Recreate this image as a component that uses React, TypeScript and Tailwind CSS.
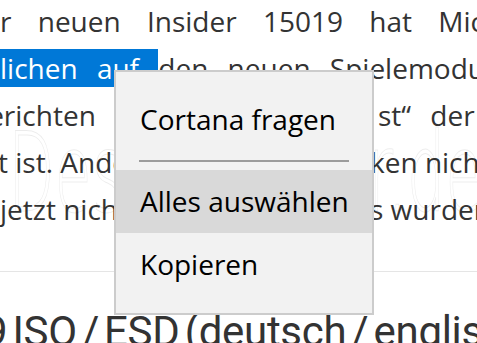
const body = "font-['Open_Sans',sans-serif] text-[28px] leading-[47px] text-[#333333] whitespace-nowrap"
const menuItem = "h-[63px] pl-[24px] leading-[63px] text-[28px] text-black"

const ContextMenu = () => {
    return (
        <div className="absolute left-[114px] top-[70px] w-[260px] border-2 border-[#cccccc] bg-[#f2f2f2] pt-[16px] pb-[17px] font-['Open_Sans',sans-serif]">
            <div className={menuItem}>Cortana fragen</div>
            <div className="h-[19px] pt-[9px]">
                <div className="mx-[23px] h-[2px] bg-[#9c9c9c]"></div>
            </div>
            <div className={`${menuItem} bg-[#d9d9d9]`}>Alles auswählen</div>
            <div className={menuItem}>Kopieren</div>
        </div>
    )
}

const App = () => {
    return (
        <div className="relative w-[477px] h-[343px] overflow-hidden bg-white">
            {/* article text, cropped on both sides */}
            <div className="-mt-[2px]">
                <p className={`${body} [word-spacing:19px]`}>r neuen Insider 15019 hat Microsoft</p>
                <p className={`${body} [word-spacing:12px]`}>
                    <span className="bg-[#0078d7] text-white">lichen auf </span>den neuen Spielemodus
                </p>
                <div className={`${body} grid grid-cols-[372px_1fr] overflow-hidden`}>
                    <span className="-ml-[29px]">berichten</span>
                    <span className="pl-[6px] [word-spacing:12px]">st“ der Spielemodus</span>
                </div>
                <div className={`${body} grid grid-cols-[372px_1fr] overflow-hidden`}>
                    <span className="-ml-[2px]">t ist. Andere</span>
                    <span className="-ml-[2px]">ken nicht</span>
                </div>
                <div className={`${body} grid grid-cols-[372px_1fr] overflow-hidden`}>
                    <span>jetzt nicht</span>
                    <span className="-ml-[2px]">s wurden</span>
                </div>
            </div>

            <div className="mt-[38px] h-px bg-[#e5e5e5]"></div>

            <h2 className="mt-[39px] -ml-[16px] whitespace-nowrap font-['Roboto',sans-serif] text-[42px] leading-[42px] tracking-[-0.3px] [word-spacing:-5px] text-[#333333]">
                9 ISO / ESD (deutsch / englisch)
            </h2>

            {/* watermark */}
            <div className="pointer-events-none absolute left-[8px] top-[118px] origin-left scale-x-[0.55] whitespace-nowrap font-['DejaVu_Sans',sans-serif] text-[110px] font-extralight leading-none text-transparent [-webkit-text-stroke:1px_rgba(0,0,0,0.08)]">
                Deskmodder.de
            </div>

            <ContextMenu />
        </div>
    )
}

export default App
